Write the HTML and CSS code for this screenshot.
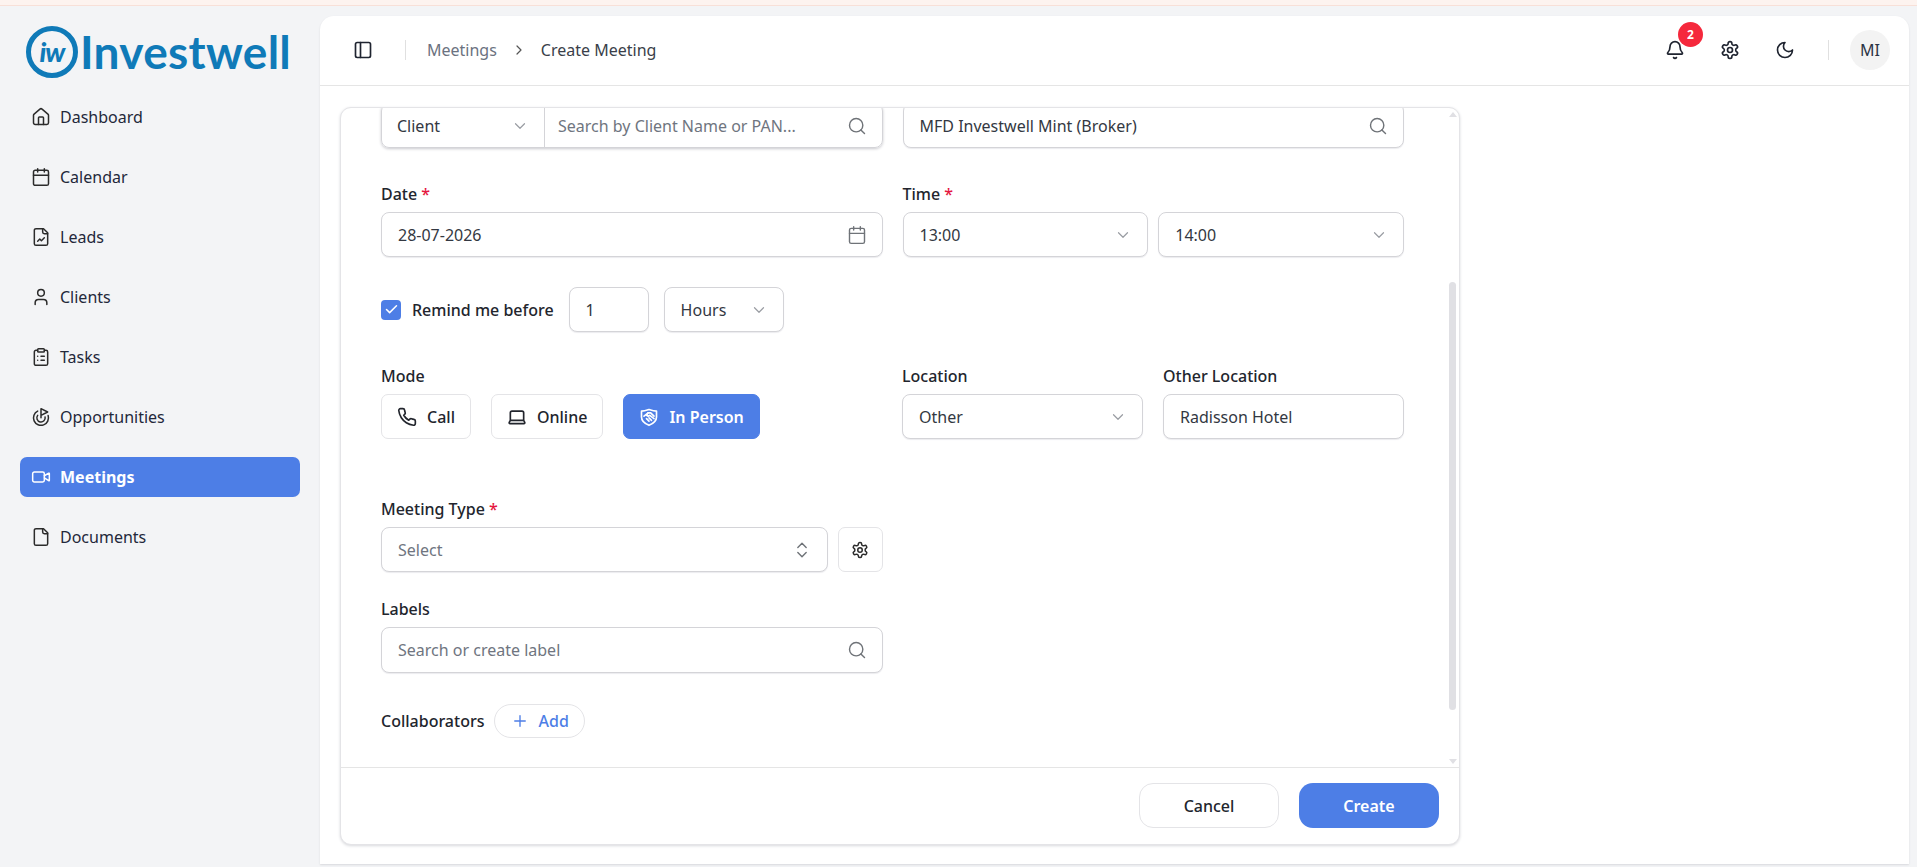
FILE: index.html
```html
<!DOCTYPE html>
<html>
  <head>
    <title>Create Meeting</title>
    <link rel="stylesheet" href="styles.css">
  </head>

<body>
  <svg class="sprite">
    <symbol id="i-home" viewBox="0 0 24 24"><path d="M15 21v-8a1 1 0 0 0-1-1h-4a1 1 0 0 0-1 1v8"/><path d="M3 10a2 2 0 0 1 .709-1.528l7-5.999a2 2 0 0 1 2.582 0l7 5.999A2 2 0 0 1 21 10v9a2 2 0 0 1-2 2H5a2 2 0 0 1-2-2z"/></symbol>
    <symbol id="i-calendar" viewBox="0 0 24 24"><path d="M8 2v4"/><path d="M16 2v4"/><rect width="18" height="18" x="3" y="4" rx="2"/><path d="M3 10h18"/></symbol>
    <symbol id="i-leads" viewBox="0 0 24 24"><path d="M15 2H6a2 2 0 0 0-2 2v16a2 2 0 0 0 2 2h12a2 2 0 0 0 2-2V7Z"/><path d="M14 2v4a2 2 0 0 0 2 2h4"/><path d="m16 13-3.5 3.5-2-2L8 17"/></symbol>
    <symbol id="i-user" viewBox="0 0 24 24"><path d="M19 21v-2a4 4 0 0 0-4-4H9a4 4 0 0 0-4 4v2"/><circle cx="12" cy="7" r="4"/></symbol>
    <symbol id="i-tasks" viewBox="0 0 24 24"><rect width="8" height="4" x="8" y="2" rx="1" ry="1"/><path d="M16 4h2a2 2 0 0 1 2 2v14a2 2 0 0 1-2 2H6a2 2 0 0 1-2-2V6a2 2 0 0 1 2-2h2"/><path d="M12 11h4"/><path d="M12 16h4"/><path d="M8 11h.01"/><path d="M8 16h.01"/></symbol>
    <symbol id="i-goal" viewBox="0 0 24 24"><path d="M12 13V2l8 4-8 4"/><path d="M20.561 10.222a9 9 0 1 1-12.55-5.29"/><path d="M8.002 9.997a5 5 0 1 0 8.9 2.02"/></symbol>
    <symbol id="i-video" viewBox="0 0 24 24"><path d="m16 13 5.223 3.482a.5.5 0 0 0 .777-.416V7.87a.5.5 0 0 0-.752-.432L16 10.5"/><rect x="2" y="6" width="14" height="12" rx="2"/></symbol>
    <symbol id="i-file" viewBox="0 0 24 24"><path d="M15 2H6a2 2 0 0 0-2 2v16a2 2 0 0 0 2 2h12a2 2 0 0 0 2-2V7Z"/><path d="M14 2v4a2 2 0 0 0 2 2h4"/></symbol>
    <symbol id="i-panel" viewBox="0 0 24 24"><rect width="18" height="18" x="3" y="3" rx="2"/><path d="M9 3v18"/></symbol>
    <symbol id="i-bell" viewBox="0 0 24 24"><path d="M10.268 21a2 2 0 0 0 3.464 0"/><path d="M3.262 15.326A1 1 0 0 0 4 17h16a1 1 0 0 0 .74-1.673C19.41 13.956 18 12.499 18 8A6 6 0 0 0 6 8c0 4.499-1.411 5.956-2.738 7.326"/></symbol>
    <symbol id="i-gear" viewBox="0 0 24 24"><path d="M12.22 2h-.44a2 2 0 0 0-2 2v.18a2 2 0 0 1-1 1.73l-.43.25a2 2 0 0 1-2 0l-.15-.08a2 2 0 0 0-2.73.73l-.22.38a2 2 0 0 0 .73 2.73l.15.1a2 2 0 0 1 1 1.72v.51a2 2 0 0 1-1 1.74l-.15.09a2 2 0 0 0-.73 2.73l.22.38a2 2 0 0 0 2.73.73l.15-.08a2 2 0 0 1 2 0l.43.25a2 2 0 0 1 1 1.73V20a2 2 0 0 0 2 2h.44a2 2 0 0 0 2-2v-.18a2 2 0 0 1 1-1.73l.43-.25a2 2 0 0 1 2 0l.15.08a2 2 0 0 0 2.73-.73l.22-.39a2 2 0 0 0-.73-2.73l-.15-.08a2 2 0 0 1-1-1.74v-.5a2 2 0 0 1 1-1.74l.15-.09a2 2 0 0 0 .73-2.73l-.22-.38a2 2 0 0 0-2.73-.73l-.15.08a2 2 0 0 1-2 0l-.43-.25a2 2 0 0 1-1-1.73V4a2 2 0 0 0-2-2z"/><circle cx="12" cy="12" r="3"/></symbol>
    <symbol id="i-moon" viewBox="0 0 24 24"><path d="M12 3a6 6 0 0 0 9 9 9 9 0 1 1-9-9Z"/></symbol>
    <symbol id="i-search" viewBox="0 0 24 24"><path d="m21 21-4.34-4.34"/><circle cx="11" cy="11" r="8"/></symbol>
    <symbol id="i-down" viewBox="0 0 24 24"><path d="m6 9 6 6 6-6"/></symbol>
    <symbol id="i-right" viewBox="0 0 24 24"><path d="m9 18 6-6-6-6"/></symbol>
    <symbol id="i-updown" viewBox="0 0 24 24"><path d="m7 15 5 5 5-5"/><path d="m7 9 5-5 5 5"/></symbol>
    <symbol id="i-phone" viewBox="0 0 24 24"><path d="M22 16.92v3a2 2 0 0 1-2.18 2 19.79 19.79 0 0 1-8.63-3.07 19.5 19.5 0 0 1-6-6 19.79 19.79 0 0 1-3.07-8.67A2 2 0 0 1 4.11 2h3a2 2 0 0 1 2 1.72 12.84 12.84 0 0 0 .7 2.81 2 2 0 0 1-.45 2.11L8.09 9.91a16 16 0 0 0 6 6l1.27-1.27a2 2 0 0 1 2.11-.45 12.84 12.84 0 0 0 2.81.7A2 2 0 0 1 22 16.92z"/></symbol>
    <symbol id="i-laptop" viewBox="0 0 24 24"><path d="M20 16V7a2 2 0 0 0-2-2H6a2 2 0 0 0-2 2v9m16 0H4m16 0 1.28 2.55a1 1 0 0 1-.9 1.45H3.62a1 1 0 0 1-.9-1.45L4 16"/></symbol>
    <symbol id="i-shake" viewBox="0 0 24 24"><path d="M3 5c3 0 6-1 9-2 3 1 6 2 9 2v7c0 5-4 8-9 10-5-2-9-5-9-10z"/><path d="M6 11l5-4h3l4 4"/><path d="M11 7l-2 3 2 1 2-1 5 4"/><path d="M9 14l3 3M12 13l3 3"/></symbol>
    <symbol id="i-plus" viewBox="0 0 24 24"><path d="M5 12h14"/><path d="M12 5v14"/></symbol>
    <symbol id="i-check" viewBox="0 0 24 24"><path d="M20 6 9 17l-5-5"/></symbol>
  </svg>

  <div class="topstrip"></div>

  <div class="layout">
    <aside class="sidebar">
      <div class="logo">
        <span class="logomark">iw</span>
        <span class="logotext">Investwell</span>
      </div>
      <nav class="nav">
        <a class="navitem"><svg class="icon"><use href="#i-home"/></svg>Dashboard</a>
        <a class="navitem"><svg class="icon"><use href="#i-calendar"/></svg>Calendar</a>
        <a class="navitem"><svg class="icon"><use href="#i-leads"/></svg>Leads</a>
        <a class="navitem"><svg class="icon"><use href="#i-user"/></svg>Clients</a>
        <a class="navitem"><svg class="icon"><use href="#i-tasks"/></svg>Tasks</a>
        <a class="navitem"><svg class="icon"><use href="#i-goal"/></svg>Opportunities</a>
        <a class="navitem active"><svg class="icon"><use href="#i-video"/></svg>Meetings</a>
        <a class="navitem"><svg class="icon"><use href="#i-file"/></svg>Documents</a>
      </nav>
    </aside>

    <main class="panel">
      <header class="header">
        <svg class="icon"><use href="#i-panel"/></svg>
        <span class="vsep first"></span>
        <span class="crumb">Meetings</span>
        <svg class="icon crumbarrow"><use href="#i-right"/></svg>
        <span class="crumb current">Create Meeting</span>
        <div class="headeractions">
          <span class="bell">
            <svg class="icon"><use href="#i-bell"/></svg>
            <span class="badge">2</span>
          </span>
          <svg class="icon"><use href="#i-gear"/></svg>
          <svg class="icon"><use href="#i-moon"/></svg>
          <span class="vsep"></span>
          <span class="avatar">MI</span>
        </div>
      </header>

      <section class="content">
        <div class="card">
          <div class="cardbody">
            <form class="form">
              <div class="row toprow">
                <div class="clientpicker">
                  <div class="clientselect">Client<svg class="icon small muted"><use href="#i-down"/></svg></div>
                  <div class="clientsearch"><span class="placeholder ellipsis">Search by Client Name or PAN...</span><svg class="icon muted"><use href="#i-search"/></svg></div>
                </div>
                <div class="input">MFD Investwell Mint (Broker)<svg class="icon muted"><use href="#i-search"/></svg></div>
              </div>

              <div class="row daterow">
                <div>
                  <label class="label">Date <span class="req">*</span></label>
                  <div class="input">28-07-2026<svg class="icon muted"><use href="#i-calendar"/></svg></div>
                </div>
                <div>
                  <label class="label">Time <span class="req">*</span></label>
                  <div class="timepair">
                    <div class="input">13:00<svg class="icon small muted"><use href="#i-down"/></svg></div>
                    <div class="input">14:00<svg class="icon small muted"><use href="#i-down"/></svg></div>
                  </div>
                </div>
              </div>

              <div class="remind">
                <span class="checkbox"><svg class="icon checkmark"><use href="#i-check"/></svg></span>
                <span class="remindtext">Remind me before</span>
                <div class="input numberbox">1</div>
                <div class="input hoursbox">Hours<svg class="icon small muted"><use href="#i-down"/></svg></div>
              </div>

              <div class="row moderow">
                <div>
                  <label class="label">Mode</label>
                  <div class="modes">
                    <button type="button" class="modebutton"><svg class="icon"><use href="#i-phone"/></svg>Call</button>
                    <button type="button" class="modebutton"><svg class="icon"><use href="#i-laptop"/></svg>Online</button>
                    <button type="button" class="modebutton selected"><svg class="icon"><use href="#i-shake"/></svg>In Person</button>
                  </div>
                </div>
                <div class="locationpair">
                  <div>
                    <label class="label">Location</label>
                    <div class="input">Other<svg class="icon small muted"><use href="#i-down"/></svg></div>
                  </div>
                  <div>
                    <label class="label">Other Location</label>
                    <div class="input">Radisson Hotel</div>
                  </div>
                </div>
              </div>

              <div class="row typerow">
                <div>
                  <label class="label">Meeting Type <span class="req">*</span></label>
                  <div class="typepair">
                    <div class="input"><span class="placeholder">Select</span><svg class="icon muted"><use href="#i-updown"/></svg></div>
                    <button type="button" class="gearbutton"><svg class="icon"><use href="#i-gear"/></svg></button>
                  </div>
                </div>
              </div>

              <div class="row labelsrow">
                <div>
                  <label class="label">Labels</label>
                  <div class="input tall"><span class="placeholder">Search or create label</span><svg class="icon muted"><use href="#i-search"/></svg></div>
                </div>
              </div>

              <div class="collab">
                <span class="collabtext">Collaborators</span>
                <button type="button" class="addbutton"><svg class="icon"><use href="#i-plus"/></svg>Add</button>
              </div>
            </form>

            <div class="scrollbar">
              <span class="arrowup"></span>
              <span class="thumb"></span>
              <span class="arrowdown"></span>
            </div>
          </div>

          <footer class="cardfooter">
            <button type="button" class="cancelbutton">Cancel</button>
            <button type="button" class="createbutton">Create</button>
          </footer>
        </div>
      </section>
    </main>
  </div>
</body>
</html>
```

FILE: styles.css
```css
*{
  box-sizing: border-box;
}
body{
  margin: 0;
  height: 867px;
  overflow: hidden;
  background-color: #f3f4f6;
  color: #1f2430;
  font-family: "Noto Sans", "Open Sans", sans-serif;
  font-size: 16px;
  line-height: 24px;
}
button{
  font-family: inherit;
  font-size: 16px;
  cursor: pointer;
}
.sprite{
  display: none;
}
.icon{
  width: 20px;
  height: 20px;
  flex-shrink: 0;
  fill: none;
  stroke: currentColor;
  stroke-width: 2;
  stroke-linecap: round;
  stroke-linejoin: round;
}
.icon.small{
  width: 18px;
  height: 18px;
  stroke-width: 1.6;
}
.muted{
  color: #6f7378;
  stroke-width: 1.7;
}
.muted.small{
  color: #9a9da3;
}

.topstrip{
  height: 6px;
  background-color: #fdf3ef;
  border-bottom: 1px solid #f8e0d8;
}
.layout{
  display: flex;
  height: 858px;
}

/* sidebar */
.sidebar{
  width: 320px;
  flex-shrink: 0;
  padding: 20px 20px 0;
}
.logo{
  display: flex;
  align-items: center;
  height: 51px;
  margin-left: 6px;
  color: #0f7ab8;
}
.logomark{
  width: 52px;
  height: 52px;
  border: 5px solid #0f7ab8;
  border-radius: 50%;
  display: flex;
  align-items: center;
  justify-content: center;
  font-family: "Lato", sans-serif;
  font-size: 27px;
  font-weight: 900;
  font-style: italic;
  line-height: 1;
  letter-spacing: -1px;
}
.logotext{
  font-family: "Lato", sans-serif;
  font-size: 46px;
  font-weight: 700;
  line-height: 1;
  margin-left: 2px;
  letter-spacing: 0.3px;
}
.nav{
  display: flex;
  flex-direction: column;
  gap: 20px;
  margin-top: 20px;
}
.navitem{
  display: flex;
  align-items: center;
  gap: 9px;
  height: 40px;
  padding-left: 11px;
  border-radius: 7px;
  color: #23283a;
}
.navitem .icon{
  stroke-width: 1.8;
  color: #2b2b2b;
}
.navitem.active{
  background-color: #4d7ee6;
  color: white;
  font-weight: 700;
}
.navitem.active .icon{
  color: white;
}

/* main panel */
.panel{
  width: 1589px;
  height: 848px;
  margin-top: 10px;
  background-color: white;
  border-radius: 14px 14px 0 0;
  box-shadow: 0 1px 2px #d8d9dd;
}
.header{
  display: flex;
  align-items: center;
  height: 70px;
  padding: 0 19px 1px 33px;
  border-bottom: 1px solid #e5e5e5;
}
.vsep{
  width: 1px;
  height: 20px;
  background-color: #e0e0e0;
}
.vsep.first{
  margin: 0 21px 0 32px;
}
.crumb{
  color: #6b7280;
}
.crumb.current{
  color: #3a3f4a;
}
.crumbarrow{
  width: 16px;
  height: 16px;
  margin: 0 14px;
  color: #555;
  stroke-width: 1.8;
}
.headeractions{
  margin-left: auto;
  display: flex;
  align-items: center;
  gap: 35px;
}
.headeractions .vsep{
  margin: 0 -14px 0 -2px;
}
.bell{
  position: relative;
  display: flex;
}
.badge{
  position: absolute;
  left: 13px;
  top: -18px;
  width: 25px;
  height: 25px;
  border-radius: 50%;
  background-color: #f5283c;
  color: white;
  font-size: 12px;
  font-weight: 700;
  line-height: 25px;
  text-align: center;
}
.avatar{
  width: 40px;
  height: 40px;
  border-radius: 50%;
  background-color: #f3f3f3;
  color: #2b3445;
  line-height: 40px;
  text-align: center;
}

/* form card */
.content{
  padding: 21px 0 0 20px;
}
.card{
  width: 1120px;
  height: 738px;
  background-color: white;
  border: 1px solid #e4e4e7;
  border-radius: 11px;
  box-shadow: 0 1px 3px #d8d9dd;
  display: flex;
  flex-direction: column;
  overflow: hidden;
}
.cardbody{
  flex: 1;
  display: flex;
  min-height: 0;
  border-bottom: 1px solid #e5e5e5;
}
.form{
  flex: 1;
  padding: 0 37px 0 40px;
  overflow: hidden;
}
.row{
  display: grid;
  grid-template-columns: 1fr 1fr;
  gap: 20px;
}
.toprow{
  margin-top: -5px;
}
.daterow{
  margin-top: 34px;
}
.moderow{
  margin-top: 32px;
}
.typerow{
  margin-top: 58px;
}
.labelsrow{
  margin-top: 25px;
}
.label{
  display: block;
  height: 24px;
  margin-bottom: 6px;
  font-weight: 500;
  color: #22252d;
}
.req{
  color: #e5173f;
}
.input{
  display: flex;
  align-items: center;
  justify-content: space-between;
  height: 45px;
  padding: 0 15px 0 16px;
  border: 1px solid #d4d4d8;
  border-radius: 8px;
  box-shadow: 0 1px 1px #ececef;
  color: #333842;
  background-color: white;
}
.input.tall{
  height: 46px;
}
.placeholder{
  color: #6f7580;
}
.ellipsis{
  overflow: hidden;
  white-space: nowrap;
  text-overflow: ellipsis;
}
.clientpicker{
  display: flex;
  height: 45px;
  border: 1px solid #d4d4d8;
  border-radius: 8px;
  box-shadow: 0 1px 3px #c9c9ce;
}
.clientselect{
  width: 163px;
  display: flex;
  align-items: center;
  justify-content: space-between;
  padding: 0 15px 0 15px;
  border-right: 1px solid #d4d4d8;
  color: #333842;
}
.clientsearch{
  flex: 1;
  min-width: 0;
  display: flex;
  align-items: center;
  justify-content: space-between;
  gap: 14px;
  padding: 0 15px 0 13px;
}
.timepair{
  display: grid;
  grid-template-columns: 1fr 1fr;
  gap: 10px;
}
.remind{
  display: flex;
  align-items: center;
  margin-top: 30px;
}
.checkbox{
  width: 20px;
  height: 20px;
  border-radius: 4px;
  background-color: #4d7ee6;
  display: flex;
  align-items: center;
  justify-content: center;
}
.checkmark{
  width: 15px;
  height: 15px;
  color: white;
  stroke-width: 2.4;
}
.remindtext{
  margin: 0 15px 0 11px;
  font-weight: 500;
  color: #22252d;
}
.numberbox{
  width: 80px;
}
.hoursbox{
  width: 120px;
  margin-left: 15px;
}
.modes{
  display: flex;
  gap: 20px;
}
.modebutton{
  display: flex;
  align-items: center;
  gap: 10px;
  height: 45px;
  padding: 0 15px;
  background-color: white;
  border: 1px solid #e4e4e7;
  border-radius: 7px;
  font-weight: 500;
  color: #22252d;
}
.modebutton.selected{
  background-color: #4d7ee6;
  border-color: #4d7ee6;
  color: white;
  font-weight: 600;
}
.locationpair{
  display: grid;
  grid-template-columns: 241px 241px;
  gap: 20px;
}
.typepair{
  display: flex;
  gap: 10px;
}
.typepair .input{
  flex: 1;
}
.gearbutton{
  width: 45px;
  height: 45px;
  display: flex;
  align-items: center;
  justify-content: center;
  background-color: white;
  border: 1px solid #e4e4e7;
  border-radius: 7px;
  color: #2b2b2b;
}
.gearbutton .icon{
  width: 18px;
  height: 18px;
}
.collab{
  display: flex;
  align-items: center;
  gap: 10px;
  margin-top: 31px;
}
.collabtext{
  font-weight: 500;
  color: #22252d;
}
.addbutton{
  display: flex;
  align-items: center;
  gap: 9px;
  height: 34px;
  padding: 0 15px 0 16px;
  background-color: white;
  border: 1px solid #e4e4e7;
  border-radius: 17px;
  color: #4d7ee6;
  font-weight: 500;
}
.addbutton .icon{
  width: 18px;
  height: 18px;
  stroke-width: 1.8;
}
.scrollbar{
  width: 18px;
  padding: 0 3px 0 8px;
  display: flex;
  flex-direction: column;
  align-items: center;
}
.arrowup,
.arrowdown{
  width: 0;
  height: 0;
  border-left: 4px solid transparent;
  border-right: 4px solid transparent;
}
.arrowup{
  margin-top: 4px;
  border-bottom: 5px solid #e0e0e4;
}
.arrowdown{
  margin-top: auto;
  margin-bottom: 3px;
  border-top: 5px solid #e0e0e4;
}
.thumb{
  width: 7px;
  height: 428px;
  margin-top: 165px;
  border-radius: 4px;
  background-color: #e0e0e4;
}
.cardfooter{
  height: 76px;
  display: flex;
  justify-content: flex-end;
  gap: 20px;
  padding: 15px 20px 0 0;
}
.cancelbutton,
.createbutton{
  width: 140px;
  height: 45px;
  border-radius: 14px;
  font-weight: 500;
}
.cancelbutton{
  background-color: white;
  border: 1px solid #e4e4e7;
  color: #22252d;
}
.createbutton{
  background-color: #4d7ee6;
  border: none;
  color: white;
  font-weight: 600;
}
```
